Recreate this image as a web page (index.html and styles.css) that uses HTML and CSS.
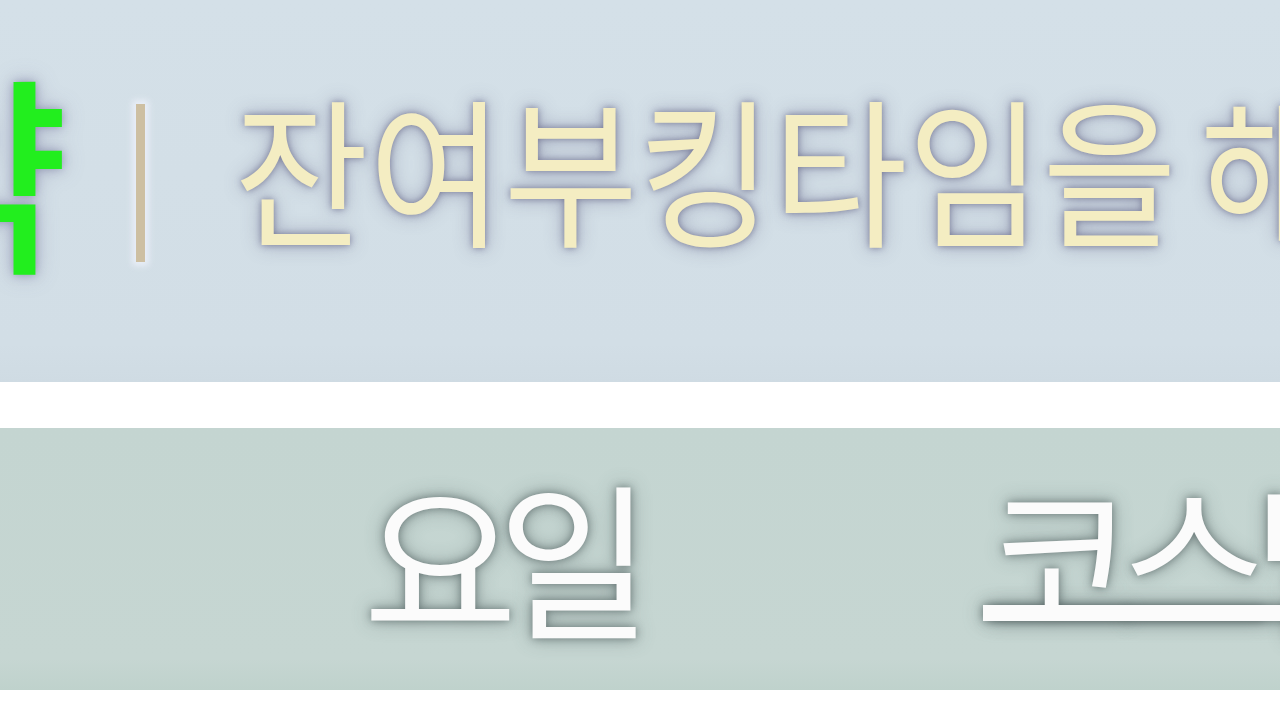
FILE: index.html
```html
<!DOCTYPE html>
<html lang="ko">
<head>
<meta charset="utf-8">
<title>부킹</title>
<link rel="stylesheet" href="styles.css">
</head>
<body>
  <div class="notice">
    <span class="avail">약</span>
    <span class="sep"></span>
    <span class="msg"><span class="squeeze">잔여부킹타임을 해당</span></span>
  </div>
  <div class="spacer"></div>
  <div class="thead">
    <span class="col col-day">요일</span>
    <span class="col col-course"><a class="link" href="#">코스별</a></span>
  </div>
</body>
</html>
```
FILE: styles.css
```css
html, body {
  margin: 0;
  padding: 0;
  background: #ffffff;
  overflow: hidden;
  width: 1280px;
  height: 720px;
}
body {
  font-family: "Noto Sans CJK KR", "Noto Sans", sans-serif;
}
.squeeze {
  display: inline-block;
  transform: scaleX(0.915);
  transform-origin: left center;
  white-space: nowrap;
  word-spacing: -20px;
}
.notice {
  height: 382px;
  background: linear-gradient(#d4e0e8, #d2dee6 90%, #cfdbe3);
  display: flex;
  align-items: center;
  white-space: nowrap;
  padding-bottom: 52px;
  box-sizing: border-box;
}
.avail {
  font-size: 210px;
  line-height: 1;
  font-weight: 500;
  color: #22ee1e;
  margin-left: -124px;
  text-shadow: 0 0 10px rgba(110, 110, 150, 0.55), 0 0 22px rgba(110, 110, 150, 0.35);
}
.sep {
  width: 9px;
  height: 158px;
  background: #cdbfa2;
  margin-left: 67px;
  margin-top: 36px;
  box-shadow: 0 0 6px 4px rgba(235, 240, 248, 0.9);
  flex: none;
}
.msg {
  margin-left: 89px;
  font-size: 160px;
  line-height: 1;
  color: #f4edc2;
  text-shadow: 0 0 8px rgba(95, 95, 130, 0.75), 0 0 20px rgba(95, 95, 130, 0.45);
}
.spacer {
  height: 46px;
  background: #ffffff;
}
.thead {
  height: 262px;
  background: linear-gradient(#c4d5d1, #c6d6d2 88%, #bfd2cc);
  display: flex;
  align-items: center;
  white-space: nowrap;
  padding-bottom: 10px;
  box-sizing: border-box;
}
.col {
  font-size: 168px;
  line-height: 1;
  letter-spacing: -20px;
  color: #fbfbfb;
  text-shadow: 0 0 8px rgba(80, 95, 95, 0.75), 0 0 20px rgba(80, 95, 95, 0.45);
  display: block;
  flex: none;
}
.col-day {
  margin-left: 363px;
  width: 620px;
}
.link {
  color: #fbfbfb;
  text-decoration: underline;
  text-decoration-thickness: 16px;
  text-underline-offset: -22px;
}
```
